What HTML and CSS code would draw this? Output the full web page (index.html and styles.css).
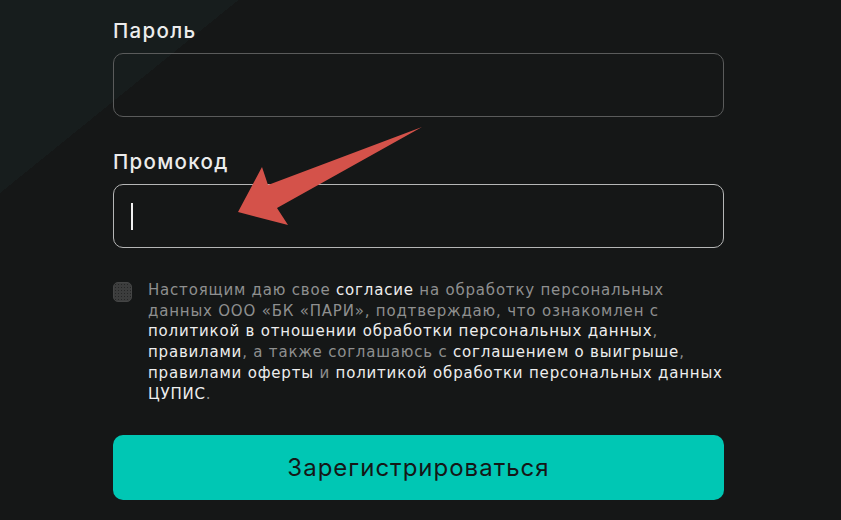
FILE: index.html
```html
<!DOCTYPE html>
<html lang="ru">
<head>
<meta charset="utf-8">
<link rel="stylesheet" href="styles.css">
</head>
<body>
<div class="page">
  <form class="form">
    <label class="label">Пароль</label>
    <div class="input"></div>
    <label class="label label-promo">Промокод</label>
    <div class="input input-focus"><span class="caret"></span></div>
    <div class="consent">
      <span class="checkbox"></span>
      <p class="consent-text">Настоящим даю свое <a>согласие</a> на обработку персональных<br>данных ООО «БК «ПАРИ», подтверждаю, что ознакомлен с<br><a>политикой в отношении обработки персональных данных</a>,<br><a>правилами</a>, а также соглашаюсь с <a>соглашением о выигрыше</a>,<br><a>правилами оферты</a> и <a>политикой обработки персональных данных<br>ЦУПИС</a>.</p>
    </div>
    <button type="button" class="submit">Зарегистрироваться</button>
  </form>
  <svg class="arrow" width="841" height="520" viewBox="0 0 841 520">
    <polygon points="422,127 268,185 262,167 238,212 288,225 277,208" fill="#d4524a"/>
  </svg>
</div>
</body>
</html>
```
FILE: styles.css
```css
html, body {
  margin: 0;
  padding: 0;
}
body {
  width: 841px;
  height: 520px;
  overflow: hidden;
  background: #151717;
  font-family: Inter, "Noto Sans", sans-serif;
}
.page {
  position: relative;
  width: 841px;
  height: 520px;
  background: linear-gradient(141deg, #171d1d 0, #171d1d 150px, #151717 150px, #151717 100%);
}
.form {
  display: flex;
  flex-direction: column;
  padding: 17px 0 0 113px;
  width: 611px;
}
.label {
  color: #ececec;
  font-size: 20.5px;
  font-weight: 500;
  line-height: 28px;
  letter-spacing: 1.3px;
  margin-bottom: 8px;
}
.label-promo {
  margin-top: 31px;
}
.input {
  box-sizing: border-box;
  height: 64px;
  border: 1px solid #5a5b5b;
  border-radius: 10px;
  display: flex;
  align-items: center;
  padding-left: 17px;
}
.input-focus {
  border-color: #b5b6b6;
}
.caret {
  width: 1.5px;
  height: 27px;
  background: #f0f0f0;
}
.consent {
  display: flex;
  gap: 16px;
  margin-top: 32px;
}
.checkbox {
  flex: none;
  width: 19px;
  height: 20px;
  margin-top: 2px;
  box-sizing: border-box;
  border-radius: 5px;
  background-color: #3c3d3d;
  background-image: radial-gradient(circle, #252626 0.7px, transparent 0.9px);
  background-size: 3px 3px;
  border: 1px solid #444545;
}
.consent-text {
  margin: 0;
  color: #8e8f8f;
  font-family: "DejaVu Sans", Inter, sans-serif;
  font-size: 15px;
  line-height: 20.7px;
  letter-spacing: 0.8px;
}
.consent-text a {
  color: #eeeeee;
}
.submit {
  margin-top: 31px;
  height: 65px;
  border: none;
  border-radius: 10px;
  background: #00c7b4;
  color: #151717;
  font-family: Inter, Roboto, sans-serif;
  font-size: 24px;
  font-weight: 400;
  letter-spacing: 1px;
  cursor: pointer;
}
.arrow {
  position: absolute;
  left: 0;
  top: 0;
  pointer-events: none;
}
```
